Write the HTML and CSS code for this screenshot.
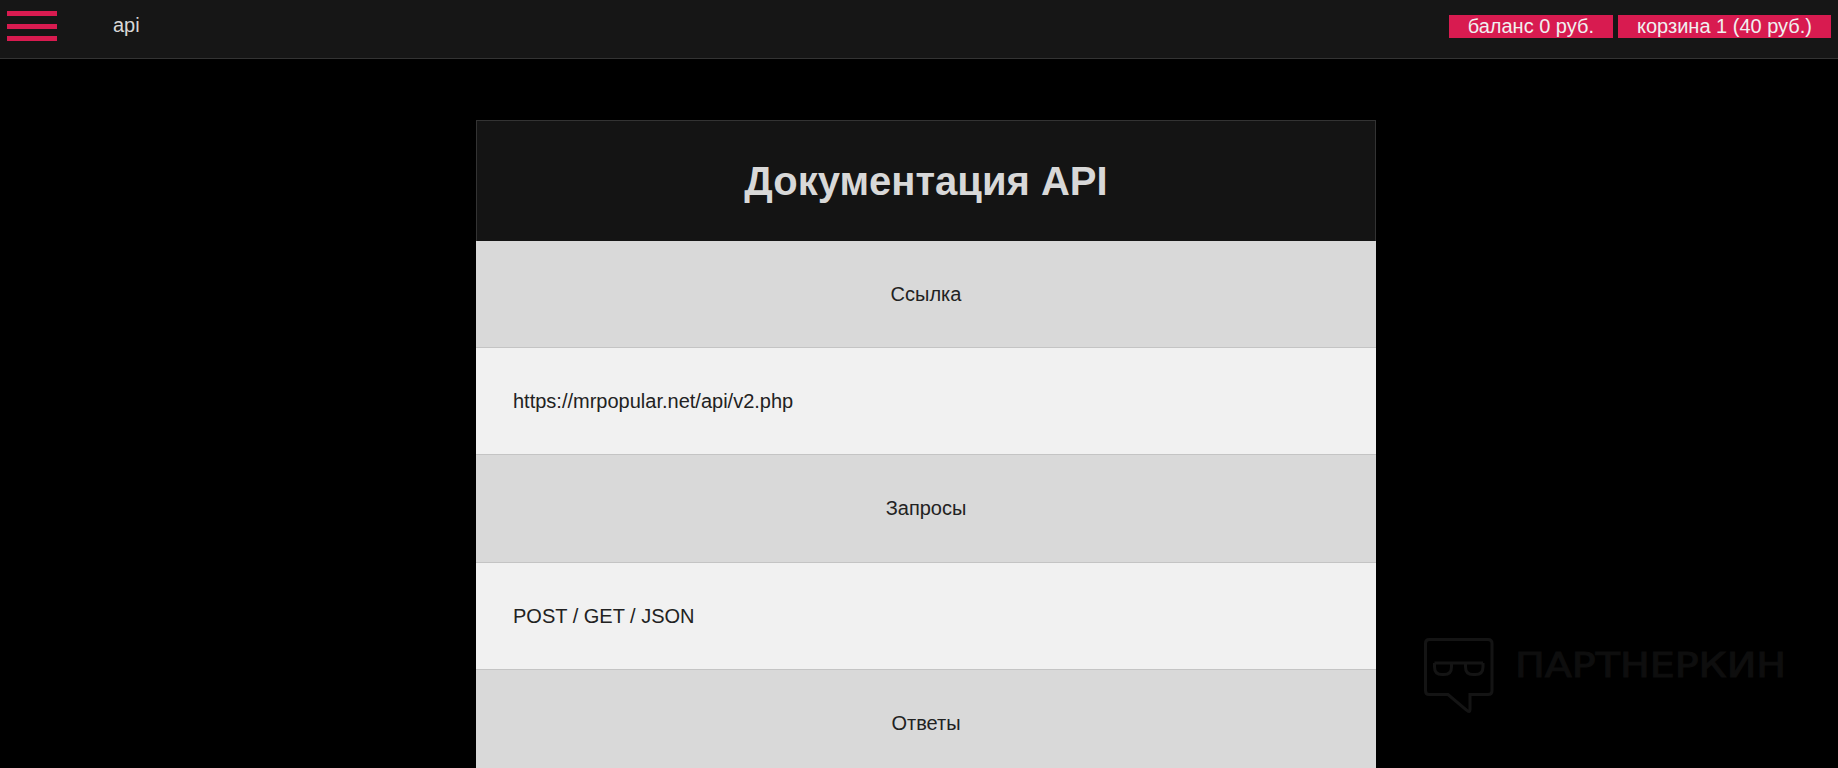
FILE: index.html
```html
<!DOCTYPE html>
<html lang="ru">
<head>
  <meta charset="UTF-8" />
  <meta name="viewport" content="width=device-width, initial-scale=1.0"/>
  <title>api</title>
  <link rel="stylesheet" href="styles.css">
</head>
<body>
  <header class="topbar">
    <button class="burger" aria-label="menu">
      <span></span>
      <span></span>
      <span></span>
    </button>
    <div class="page-name">api</div>
    <div class="topbar-links">
      <a class="pill" href="#">баланс 0 руб.</a>
      <a class="pill" href="#">корзина 1 (40 руб.)</a>
    </div>
  </header>

  <main class="docs">
    <h1 class="docs-title">Документация API</h1>
    <div class="row row-head">Ссылка</div>
    <div class="row row-body">https://mrpopular.net/api/v2.php</div>
    <div class="row row-head">Запросы</div>
    <div class="row row-body">POST / GET / JSON</div>
    <div class="row row-head">Ответы</div>
  </main>

  <div class="watermark">
    <svg class="watermark-icon" width="70" height="76" viewBox="0 0 70 76" fill="none">
      <path d="M5 1.5H64Q68 1.5 68 5.5V52.5Q68 56.5 64 56.5H46V71Q46 75.5 42.5 72L24 56.5H5Q1.5 56.5 1.5 52.5V5.5Q1.5 1.5 5 1.5Z" />
      <path d="M10.5 25H59M10.5 25V29Q10.5 36.5 18 36.5H20Q27.5 36.5 27.5 29V26.5M41.5 26.5V29Q41.5 36.5 49 36.5H51.5Q59 36.5 59 29V25" />
    </svg>
    <span class="watermark-text">ПАРТНЕРКИН</span>
  </div>
</body>
</html>
```

FILE: styles.css
```css
html, body {
  height: 100%;
  overflow: hidden;
}

body {
  margin: 0;
  background: #000;
  font-family: "Liberation Sans", Arial, sans-serif;
}

.topbar {
  display: flex;
  align-items: flex-start;
  height: 58px;
  background: #161616;
  border-bottom: 1px solid #333;
}

.burger {
  display: flex;
  flex-direction: column;
  gap: 7.5px;
  width: 50px;
  margin: 11px 0 0 7px;
  padding: 0;
  background: none;
  border: none;
}

.burger span {
  display: block;
  height: 5px;
  background: #d81b50;
}

.page-name {
  margin: 14px 0 0 56px;
  color: #d8d8d8;
  font-size: 20px;
}

.topbar-links {
  display: flex;
  gap: 5px;
  margin: 15px 7px 0 auto;
}

.pill {
  padding: 0 19px;
  background: #d81b50;
  color: #f0f0f0;
  font-size: 20px;
  line-height: 23px;
  text-decoration: none;
}

.docs {
  width: 900px;
  margin: 61px 0 0 476px;
}

.docs-title {
  margin: 0;
  padding: 35px 0;
  background: #141414;
  border: 1px solid #333;
  border-bottom: none;
  color: #d8d8d8;
  font-size: 40px;
  line-height: 50px;
  text-align: center;
}

.row {
  padding: 37px;
  color: #222;
  font-size: 20px;
  line-height: 32.2px;
  border-bottom: 1px solid #c4c4c4;
}

.row-head {
  background: #d9d9d9;
  text-align: center;
}

.row-body {
  background: #f1f1f1;
}

.watermark {
  position: absolute;
  left: 1424px;
  top: 638px;
  display: flex;
  align-items: flex-start;
  gap: 21px;
}

.watermark-icon path {
  stroke: #141414;
  stroke-width: 3;
}

.watermark-text {
  margin-top: 8px;
  color: #0e0e0e;
  font-family: "DejaVu Sans", sans-serif;
  font-size: 33px;
  line-height: 40px;
  -webkit-text-stroke: 1px #0e0e0e;
  transform: scaleX(1.2);
  transform-origin: left center;
}
```
